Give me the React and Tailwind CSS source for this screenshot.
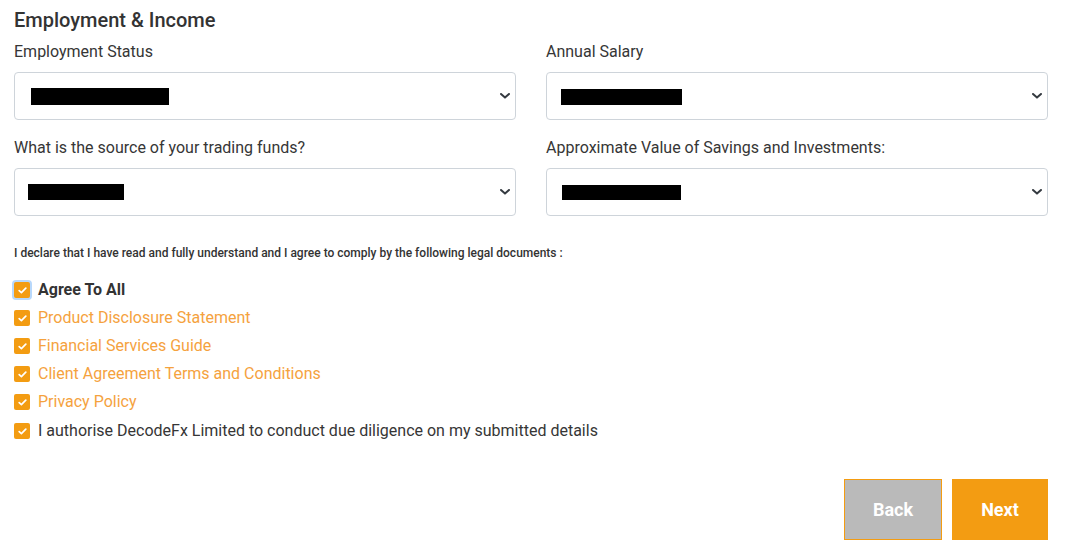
import React from "react";

const Chevron = () => (
  <svg width="10" height="6" viewBox="0 0 10 6" className="shrink-0">
    <path d="M1 1 L5 4.6 L9 1" fill="none" stroke="#343a40" strokeWidth="2" strokeLinecap="round" strokeLinejoin="round" />
  </svg>
);

const Select = ({ redact }) => (
  <div className="relative h-12 w-full rounded-[4px] border border-[#ced4da] bg-white">
    <div className="absolute bg-black" style={redact} />
    <div className="absolute right-[5px] top-1/2 -translate-y-1/2 flex">
      <Chevron />
    </div>
  </div>
);

const Check = ({ focus }) => (
  <span
    className={
      "flex h-4 w-4 shrink-0 items-center justify-center rounded-[2px] bg-[#f39c12] " +
      (focus ? "ring-2 ring-[#b8d8fb]" : "")
    }
  >
    <svg width="9" height="7" viewBox="0 0 9 7">
      <path d="M1.2 3.6 L3.4 5.6 L7.8 1.2" fill="none" stroke="#fff" strokeWidth="1.7" strokeLinecap="round" strokeLinejoin="round" />
    </svg>
  </span>
);

export default function App() {
  const rows = [
    { t: "Product Disclosure Statement" },
    { t: "Financial Services Guide" },
    { t: "Client Agreement Terms and Conditions" },
    { t: "Privacy Policy" },
  ];
  return (
    <div className="h-[555px] w-[1070px] bg-white text-[#363636] font-['Roboto',sans-serif]">
      <div className="ml-[14px] w-[1034px] pt-2">
        <h2 className="text-[20px] leading-6 font-medium text-[#333]">Employment &amp; Income</h2>
        <div className="mt-[8px] grid grid-cols-2 gap-x-[30px]">
          <div>
            <div className="text-[16px] leading-6">Employment Status</div>
            <div className="mt-[8px]">
              <Select redact={{ left: 16, top: 15, width: 138, height: 17 }} />
            </div>
          </div>
          <div>
            <div className="text-[16px] leading-6">Annual Salary</div>
            <div className="mt-[8px]">
              <Select redact={{ left: 14, top: 16, width: 121, height: 16 }} />
            </div>
          </div>
          <div className="mt-[16px]">
            <div className="text-[16px] leading-6">What is the source of your trading funds?</div>
            <div className="mt-[8px]">
              <Select redact={{ left: 13, top: 15, width: 96, height: 16 }} />
            </div>
          </div>
          <div className="mt-[16px]">
            <div className="text-[16px] leading-6">Approximate Value of Savings and Investments:</div>
            <div className="mt-[8px]">
              <Select redact={{ left: 15, top: 16, width: 119, height: 15 }} />
            </div>
          </div>
        </div>

        <p className="mt-[29px] text-[12px] leading-4 font-medium text-[#333]">
          I declare that I have read and fully understand and I agree to comply by the following legal documents :
        </p>

        <div className="mt-[15px] flex flex-col">
          <label className="flex h-7 items-center gap-2">
            <Check focus />
            <span className="text-[16px] font-bold text-[#333]">Agree To All</span>
          </label>
          {rows.map((r) => (
            <label key={r.t} className="flex h-7 items-center gap-2">
              <Check />
              <span className="text-[16px] text-[#f5a23e]">{r.t}</span>
            </label>
          ))}
          <label className="mt-px flex h-7 items-center gap-2">
            <Check />
            <span className="text-[16px] text-[#363636]">I authorise DecodeFx Limited to conduct due diligence on my submitted details</span>
          </label>
        </div>

        <div className="mt-[34px] flex justify-end gap-[10px]">
          <button className="flex h-[61px] w-[98px] items-center justify-center border border-[#f39c12] bg-[#bababa] pb-px text-[18px] font-bold text-white">
            Back
          </button>
          <button className="flex h-[61px] w-[96px] items-center justify-center bg-[#f39c12] pb-px text-[18px] font-bold text-white">
            Next
          </button>
        </div>
      </div>
    </div>
  );
}
